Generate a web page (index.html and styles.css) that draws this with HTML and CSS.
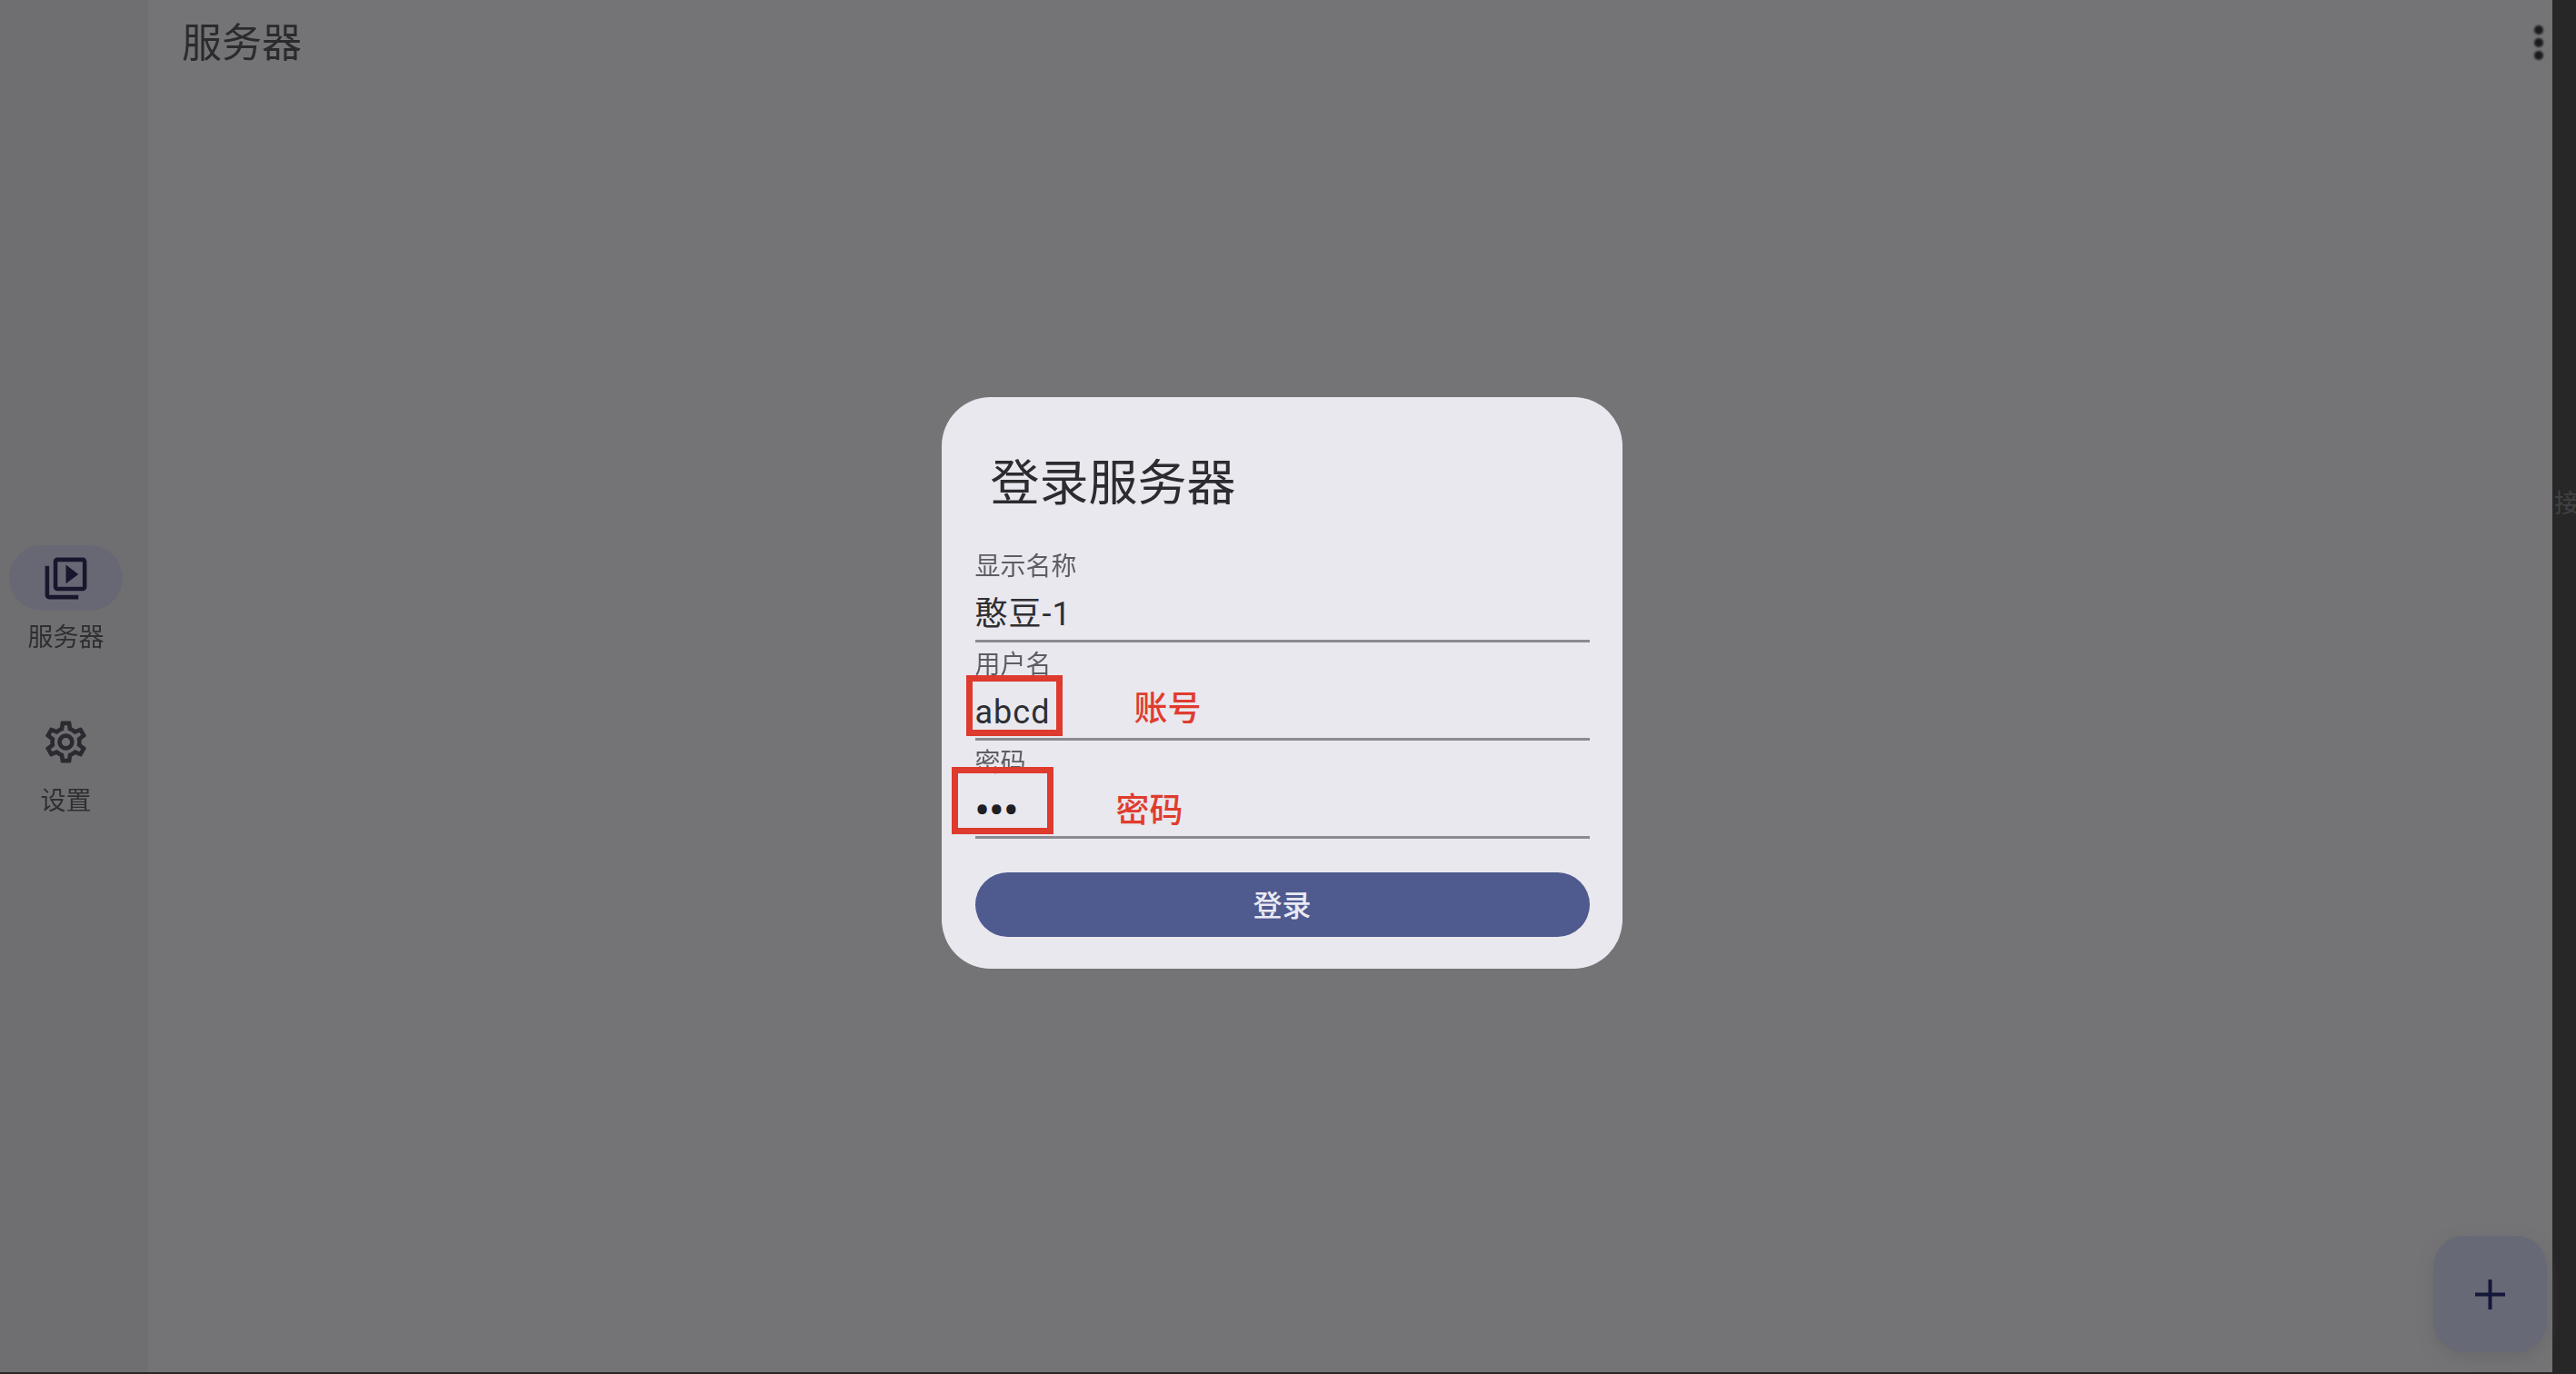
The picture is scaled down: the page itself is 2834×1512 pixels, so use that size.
FILE: index.html
```html
<!DOCTYPE html>
<html>
  <head>
    <meta charset="utf-8">
    <link rel="stylesheet" href="styles.css">
  </head>
  <body>
    <div class="app">
      <nav class="rail">
        <div class="rail-item">
          <div class="rail-pill active">
            <svg class="rail-icon" viewBox="0 0 24 24"><path d="M4 6H2v14c0 1.1.9 2 2 2h14v-2H4V6zm16-4H8c-1.1 0-2 .9-2 2v12c0 1.1.9 2 2 2h12c1.100 0 2-.9 2-2V4c0-1.100-.9-2-2-2zm0 14H8V4h12v12zM12 5.500v9l6-4.500z"/></svg>
          </div>
          <div class="rail-label">服务器</div>
        </div>
        <div class="rail-item">
          <div class="rail-pill">
            <svg class="rail-icon dim" viewBox="0 0 24 24"><path d="M19.430 12.980c.04-.32.07-.64.07-.98 0-.34-.03-.66-.07-.98l2.110-1.650c.19-.15.24-.42.12-.64l-2-3.460c-.09-.16-.26-.25-.44-.25-.06 0-.12.01-.17.03l-2.490 1c-.52-.4-1.080-.73-1.690-.98l-.38-2.650C14.460 2.180 14.250 2 14 2h-4c-.25 0-.46.18-.49.42l-.38 2.650c-.61.25-1.170.59-1.690.98l-2.490-1c-.06-.02-.12-.03-.18-.03-.17 0-.34.09-.43.25l-2 3.460c-.13.22-.07.49.12.64l2.110 1.650c-.04.32-.07.65-.07.98 0 .33.03.66.07.98l-2.110 1.650c-.19.15-.24.42-.12.64l2 3.460c.09.16.26.25.44.25.06 0 .12-.01.17-.03l2.490-1c.52.4 1.080.73 1.690.98l.38 2.650c.03.24.24.42.49.42h4c.25 0 .46-.18.49-.42l.38-2.650c.61-.25 1.170-.59 1.690-.98l2.490 1c.06.02.12.03.18.03.17 0 .34-.09.43-.25l2-3.460c.12-.22.07-.49-.12-.64l-2.110-1.650zm-1.980-1.710c.04.31.05.52.05.73 0 .21-.02.43-.05.73l-.14 1.130.89.7 1.080.84-.7 1.210-1.270-.51-1.040-.42-.9.68c-.43.32-.84.56-1.250.73l-1.060.43-.16 1.130-.2 1.350h-1.400l-.19-1.350-.16-1.130-1.060-.43c-.43-.18-.83-.41-1.230-.71l-.91-.7-1.060.43-1.270.51-.7-1.210 1.080-.84.89-.7-.14-1.130c-.03-.31-.05-.54-.05-.74s.02-.43.05-.73l.14-1.130-.89-.7-1.080-.84.7-1.210 1.270.51 1.040.42.9-.68c.43-.32.84-.56 1.250-.73l1.060-.43.16-1.130.2-1.350h1.390l.19 1.350.16 1.130 1.060.43c.43.18.83.41 1.230.71l.91.7 1.060-.43 1.270-.51.7 1.210-1.070.85-.89.7.14 1.130zM12 8c-2.210 0-4 1.790-4 4s1.790 4 4 4 4-1.790 4-4-1.790-4-4-4zm0 6c-1.100 0-2-.9-2-2s.9-2 2-2 2 .9 2 2-.9 2-2 2z"/></svg>
          </div>
          <div class="rail-label">设置</div>
        </div>
      </nav>

      <main class="content">
        <header class="topbar">
          <div class="page-title">服务器</div>
          <div class="kebab"><span></span><span></span><span></span></div>
        </header>
        <button class="fab">
          <svg viewBox="0 0 33 33"><path d="M16.500 0v33M0 16.500h33"/></svg>
        </button>
      </main>

      <div class="scroll-strip"><span>接</span></div>

      <div class="overlay">
        <form class="dialog">
          <h2 class="dialog-title">登录服务器</h2>
          <div class="field">
            <div class="field-label">显示名称</div>
            <div class="field-value">憨豆-1</div>
          </div>
          <div class="field">
            <div class="field-label">用户名</div>
            <div class="field-value">abcd</div>
            <div class="mark mark-user"></div>
            <div class="note note-user">账号</div>
          </div>
          <div class="field">
            <div class="field-label">密码</div>
            <div class="field-value dots">•••</div>
            <div class="mark mark-pass"></div>
            <div class="note note-pass">密码</div>
          </div>
          <div class="login-btn">登录</div>
        </form>
      </div>
    </div>
  </body>
</html>
```

FILE: styles.css
```css
* {
  box-sizing: border-box;
  margin: 0;
  padding: 0;
}

body {
  background: #272727;
  font-family: Roboto, "Noto Sans CJK SC", sans-serif;
  height: 1512px;
  overflow: hidden;
}

.app {
  position: relative;
  display: flex;
  height: 1510px;
}

.rail {
  width: 163px;
  background: #6f6f71;
  display: flex;
  flex-direction: column;
  justify-content: center;
  gap: 59px;
  padding: 0 10px 9px;
}

.rail-item {
  display: flex;
  flex-direction: column;
  align-items: center;
}

.rail-pill {
  width: 125px;
  height: 72px;
  margin-right: 18px;
  border-radius: 36px;
  display: flex;
  align-items: center;
  justify-content: center;
}

.rail-pill.active {
  background: #686875;
}

.rail-icon {
  width: 55px;
  height: 55px;
  fill: #16172c;
  filter: blur(0.7px);
}

.rail-icon.dim {
  fill: #2a2a30;
}

.rail-label {
  margin: 11px 18px 0 0;
  font-size: 28px;
  line-height: 38px;
  color: #2f2f33;
  filter: blur(0.7px);
}

.content {
  position: relative;
  flex: 1;
  background: #747476;
}

.topbar {
  height: 94px;
  padding: 0 0 0 37px;
  display: flex;
  justify-content: space-between;
  align-items: center;
}

.page-title {
  font-size: 44px;
  line-height: 60px;
  padding-top: 1px;
  color: #2b2b2e;
  filter: blur(0.6px);
}

.kebab {
  width: 10px;
  margin-right: 10px;
  display: flex;
  flex-direction: column;
  gap: 4px;
  filter: blur(0.8px);
}

.kebab span {
  width: 10px;
  height: 10px;
  border-radius: 50%;
  background: #1b1b1d;
}

.fab {
  position: absolute;
  right: 6px;
  bottom: 22px;
  width: 125px;
  height: 128px;
  border: 0;
  border-radius: 34px;
  background: #676976;
  box-shadow: 0 6px 16px #5f5f6180;
  display: flex;
  align-items: center;
  justify-content: center;
}

.fab svg {
  width: 33px;
  height: 33px;
  stroke: #15173a;
  stroke-width: 4;
  fill: none;
  filter: blur(0.6px);
}

.scroll-strip {
  width: 26px;
  overflow: hidden;
  padding: 538px 0 0 2px;
  font-size: 28px;
  line-height: 34px;
  color: #414141;
  white-space: nowrap;
}

.scroll-strip span {
  display: block;
  width: 40px;
}

.overlay {
  position: absolute;
  top: 0;
  left: 0;
  width: 2808px;
  height: 1510px;
  display: grid;
  place-items: center;
  padding: 0 0 7px 12px;
}

.dialog {
  width: 749px;
  height: 629px;
  padding: 66px 36px 35px 37px;
  background: #e9e8ee;
  border-radius: 54px;
}

.dialog-title {
  font-size: 54px;
  font-weight: 400;
  line-height: 60px;
  padding-left: 17px;
  margin-bottom: 41px;
  color: #2c2c30;
  filter: blur(0.5px);
}

.field {
  position: relative;
  height: 108px;
}

.field-label {
  height: 38px;
  padding-top: 2px;
  font-size: 28px;
  line-height: 36px;
  color: #5d5d63;
  filter: blur(0.5px);
}

.field-value {
  height: 65px;
  padding-top: 4px;
  font-size: 36px;
  line-height: 60px;
  letter-spacing: 1px;
  color: #2e2e33;
  border-bottom: 3px solid #8b8b92;
}

.field-value.dots {
  font-size: 44px;
  letter-spacing: 0;
  font-weight: 700;
  color: #1f1f24;
}

.login-btn {
  margin-top: 32px;
  height: 71px;
  border-radius: 36px;
  background: #4f5a8f;
  color: #e9e9f2;
  font-size: 32px;
  font-weight: 500;
  line-height: 74px;
  text-align: center;
}

.mark {
  position: absolute;
  border: 7px solid #de3a2e;
}

.mark-user {
  left: -10px;
  top: 31px;
  width: 106px;
  height: 67px;
}

.mark-pass {
  left: -26px;
  top: 24px;
  width: 112px;
  height: 74px;
}

.note {
  position: absolute;
  font-size: 37px;
  font-weight: 500;
  line-height: 44px;
  color: #e03c2e;
}

.note-user {
  left: 175px;
  top: 47px;
}

.note-pass {
  left: 155px;
  top: 51px;
}
```
